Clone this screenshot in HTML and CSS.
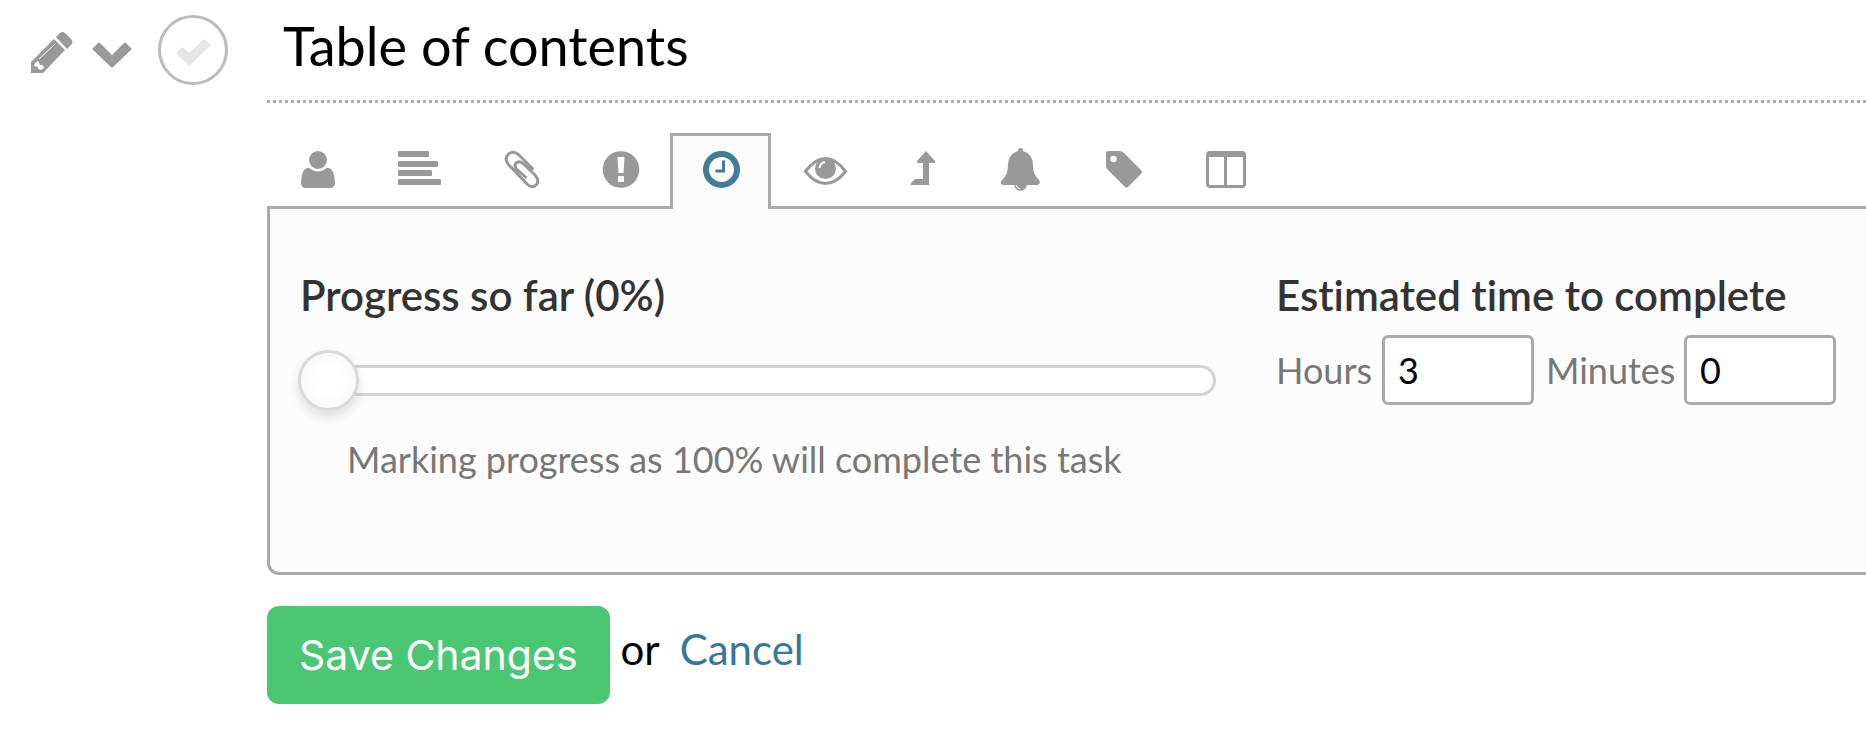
FILE: index.html
```
<!DOCTYPE html>
<html lang="en">
<head>
  <meta charset="UTF-8">
  <title>Edit Task</title>
  <link rel="stylesheet" href="styles.css">
</head>
<body>

<div class="task">

  <div class="task-tools">
    <button type="button" class="tool-btn edit-btn" aria-label="Edit">
      <svg width="44" height="44" viewBox="0 0 44 44">
        <path d="M1 31 L24 8 L35 19 L13 42 H1 Z"/>
        <path d="M26 6 L30 2 Q32 0 35 2 L41 8 Q44 11 41 14 L37 18 Z"/>
        <path class="cut" d="M5 32 L8 30 L10 34 L13 34 L14 37 L11 39 L8 38 V36 L4 35 Z"/>
        <path class="cut-line thin" d="M9 28 L25 13"/>
      </svg>
    </button>
    <button type="button" class="tool-btn toggle-btn" aria-label="Toggle">
      <svg width="40" height="26" viewBox="0 0 40 26">
        <path d="M1 6 L6 1 Q7 0 8 1 L20 13 L32 1 Q33 0 34 1 L39 6 Q40 7 39 8 L21 25 Q20 26 19 25 L1 8 Q0 7 1 6 Z"/>
      </svg>
    </button>
    <button type="button" class="check-btn" aria-label="Complete task">
      <svg width="36" height="28" viewBox="0 0 36 28">
        <path d="M2 14 L6 10 Q7 9 9 10 L14 15 L28 2 Q30 1 31 2 L35 6 Q36 7 35 8 L15 27 Q14 28 13 27 L2 16 Q1 15 2 14 Z"/>
      </svg>
    </button>
  </div>

  <div class="task-main">
    <h1 class="task-title">Table of contents</h1>

    <div class="tabs">
      <button type="button" class="tab" aria-label="Assign">
        <svg class="tab-icon" viewBox="0 0 60 48">
          <circle cx="31" cy="14" r="9"/>
          <path d="M22 22 Q31 29 40 22 Q45 21 47 29 Q48 32 48 38 Q47 42 43 42 H19 Q15 42 14 38 Q14 32 15 29 Q17 21 22 22 Z"/>
        </svg>
      </button>
      <button type="button" class="tab" aria-label="Notes">
        <svg class="tab-icon" viewBox="0 0 60 48">
          <rect x="10" y="5" width="31" height="6" rx="1"/>
          <rect x="10" y="15" width="40" height="6" rx="1"/>
          <rect x="10" y="24" width="34" height="6" rx="1"/>
          <rect x="10" y="33" width="43" height="6" rx="1"/>
        </svg>
      </button>
      <button type="button" class="tab" aria-label="Attachments">
        <svg class="tab-icon" viewBox="0 0 60 48">
          <path class="line" d="M44.500 23.500 L30 9 Q24 4 19.500 8 Q15 12.500 19 18 L38 38 Q43 43 47 39 Q51 35 46 29 L34 17.500 Q30 14.500 27 17 Q24.500 20 28 23.500 L37.500 32"/>
        </svg>
      </button>
      <button type="button" class="tab" aria-label="Priority">
        <svg class="tab-icon" viewBox="0 0 60 48">
          <circle cx="31" cy="23.500" r="18.300"/>
          <path class="cut" d="M27.500 11 H34.500 L33.500 27 H28.500 Z M28 30 H34 V36 H28 Z"/>
        </svg>
      </button>
      <button type="button" class="tab active" aria-label="Time">
        <svg class="tab-icon" viewBox="0 0 60 48">
          <circle class="ring" cx="30.500" cy="23.500" r="15.500"/>
          <path d="M31 14.500 H34 V26.500 H24.500 V23.500 H31 Z"/>
        </svg>
      </button>
      <button type="button" class="tab" aria-label="Watch">
        <svg class="tab-icon" viewBox="0 0 60 48">
          <path class="line" d="M13.500 25.500 Q23 12.500 33.500 12.500 Q44 12.500 53.500 25.500 Q44 37.500 33.500 37.500 Q23 37.500 13.500 25.500 Z"/>
          <circle cx="33.500" cy="22.500" r="10.500"/>
          <path class="cut-line" d="M27.500 22 Q28 17 33 16"/>
        </svg>
      </button>
      <button type="button" class="tab" aria-label="Move">
        <svg class="tab-icon" viewBox="0 0 60 48">
          <path d="M33 5 L42 15 V17 H36 V39 H18 V37 L22 33 H30 V17 H24 V15 Z"/>
        </svg>
      </button>
      <button type="button" class="tab" aria-label="Reminders">
        <svg class="tab-icon" viewBox="0 0 60 48">
          <path d="M24 5 Q24 2 26.500 2 Q29 2 29 5 Q39 8 39 19 Q39 29 45 34 Q47 37 44 39 H9 Q5 37 8 34 Q14 29 14 19 Q14 8 24 5 Z"/>
          <circle cx="26.500" cy="38.500" r="6.300"/>
          <path class="cut-line thin" d="M22 39 Q22.500 42.500 26.500 43"/>
        </svg>
      </button>
      <button type="button" class="tab" aria-label="Tags">
        <svg class="tab-icon" viewBox="0 0 60 48">
          <path d="M13 5 H24 Q27 5 29 7 L46 24 Q48 26 46 28 L33 41 Q31 42 30 41 L13 24 Q11 22 11 19 V7 Q11 5 13 5 Z"/>
          <circle class="cut" cx="18.500" cy="13" r="3.200"/>
        </svg>
      </button>
      <button type="button" class="tab" aria-label="Columns">
        <svg class="tab-icon" viewBox="0 0 60 48">
          <path fill-rule="evenodd" d="M14 5 H46 Q50 5 50 9 V38 Q50 42 46 42 H14 Q10 42 10 38 V9 Q10 5 14 5 Z M13 11 V39 H28 V11 Z M31 11 V39 H47 V11 Z"/>
        </svg>
      </button>
    </div>

    <div class="panel">
      <div class="progress">
        <label class="panel-heading" for="progress">Progress so far (0%)</label>
        <input type="range" id="progress" class="slider" min="0" max="100" value="0">
        <p class="hint">Marking progress as 100% will complete this task</p>
      </div>

      <div class="estimate">
        <div class="panel-heading">Estimated time to complete</div>
        <div class="time-fields">
          <label for="hours">Hours</label>
          <input type="text" id="hours" value="3">
          <label for="minutes">Minutes</label>
          <input type="text" id="minutes" value="0">
        </div>
      </div>
    </div>

    <div class="actions">
      <button type="submit" class="save-btn">Save Changes</button>
      <span class="or">or</span>
      <a href="#" class="cancel">Cancel</a>
    </div>
  </div>

</div>

</body>
</html>
```
FILE: styles.css
```
* {
  box-sizing: border-box;
}
body {
  margin: 0;
  font-family: Lato, sans-serif;
  font-variant-ligatures: none;
  background: #fff;
  color: #000;
  overflow-x: hidden;
}
button {
  background: none;
  border: none;
  padding: 0;
  cursor: pointer;
}
svg {
  display: block;
  fill: #999;
}

.task {
  display: flex;
}
.task-tools {
  display: flex;
  flex: none;
  align-items: flex-start;
  width: 267px;
  padding: 15px 0 0 30px;
}
.edit-btn {
  margin: 16px 18px 0 0;
}
.toggle-btn {
  margin: 27px 26px 0 0;
}
.check-btn {
  display: flex;
  align-items: center;
  justify-content: center;
  width: 70px;
  height: 70px;
  padding-top: 4px;
  border: 3px solid #bbb;
  border-radius: 50%;
}
.check-btn svg {
  fill: #e6e6e6;
}
.cut {
  fill: #fff;
}
.cut-line {
  fill: none;
  stroke: #fff;
  stroke-width: 2;
}
.thin {
  stroke-width: 1;
}

.task-main {
  flex: 1;
  min-width: 0;
}
.task-title {
  margin: 0;
  padding: 14px 16px 22px;
  font-size: 54px;
  font-weight: 400;
  line-height: 64px;
  border-bottom: 3px dotted #aaa;
}

/* tabs */
.tabs {
  display: flex;
  margin: 30px 0 0 -1px;
}
.tab {
  width: 101px;
  height: 76px;
  padding-top: 2px;
  border: 3px solid transparent;
  border-bottom: none;
}
.tab.active {
  position: relative;
  z-index: 1;
  background: #fcfcfc;
  border-color: #aaa;
}
.tab-icon {
  width: 60px;
  height: 48px;
  margin: -8px auto 0;
}
.tab.active .tab-icon {
  fill: #3f7d98;
}
.line {
  fill: none;
  stroke: #999;
  stroke-width: 3;
}
.ring {
  fill: none;
  stroke: #3f7d98;
  stroke-width: 6;
}

/* panel */
.panel {
  display: grid;
  grid-template-columns: minmax(0, 1fr) 562px;
  gap: 60px;
  min-height: 369px;
  margin-top: -3px;
  padding: 58px 28px 60px;
  background: #fcfcfc;
  border: 3px solid #aaa;
  border-right: none;
  border-bottom-left-radius: 12px;
}
.panel-heading {
  display: block;
  color: #333;
  font-size: 42px;
  font-weight: 600;
  line-height: 56px;
}
.progress .panel-heading {
  padding-left: 2px;
}
.slider {
  display: block;
  -webkit-appearance: none;
  appearance: none;
  width: 100%;
  height: 62px;
  margin: 26px 0 0;
  background: none;
}
.slider::-webkit-slider-runnable-track {
  height: 31px;
  background: #fff;
  border: 3px solid #d3d3d3;
  border-radius: 16px;
}
.slider::-webkit-slider-thumb {
  -webkit-appearance: none;
  width: 61px;
  height: 61px;
  margin: -18px 0 0 -3px;
  background: radial-gradient(#fff 35%, #f5f5f5);
  border: 3px solid #d9d9d9;
  border-radius: 50%;
  box-shadow: 0 6px 12px rgba(0,0,0,0.12);
}
.hint {
  margin: 24px 0 0 49px;
  color: #777;
  font-size: 36px;
  line-height: 48px;
}
.time-fields {
  display: grid;
  grid-template-columns: 94px 152px 126px 152px;
  gap: 12px;
  align-items: center;
  margin-top: 12px;
  color: #777;
  font-size: 36px;
}
.time-fields input {
  width: 100%;
  height: 70px;
  padding: 0 13px;
  font-family: inherit;
  font-size: 36px;
  color: #000;
  background: #fff;
  border: 3px solid #aaa;
  border-radius: 6px;
}

/* actions */
.actions {
  display: flex;
  align-items: flex-start;
  margin-top: 31px;
  font-size: 42px;
  line-height: 86px;
}
.save-btn {
  height: 98px;
  padding: 0 32px;
  color: #fff;
  background: #4bc774;
  border-radius: 12px;
  font-family: Inter, sans-serif;
  font-size: 41px;
}
.or {
  margin: 0 20px 0 11px;
}
.cancel {
  color: #3a7698;
  text-decoration: none;
}
```
